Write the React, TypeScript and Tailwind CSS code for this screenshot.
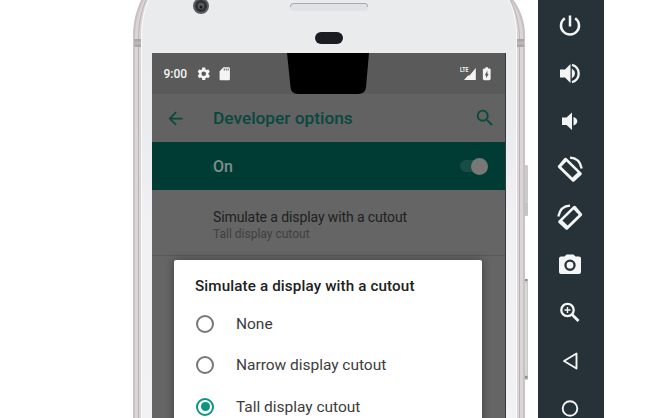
import type { ReactNode } from "react";

function Glyph({ children, size, className = "" }: { children: ReactNode; size: number; className?: string }) {
  return (
    <svg viewBox="0 0 24 24" width={size} height={size} fill="currentColor" className={"block shrink-0 " + className}>
      {children}
    </svg>
  );
}

function PhoneBody() {
  return (
    <svg viewBox="0 0 660 418" width="660" height="418" className="absolute left-0 top-0">
      <defs>
        <linearGradient id="face" x1="0" y1="0" x2="0" y2="1">
          <stop offset="0" stopColor="#e9ebec" />
          <stop offset="0.3" stopColor="#ebecef" />
          <stop offset="0.5" stopColor="#efeff4" />
          <stop offset="1" stopColor="#f1f1f6" />
        </linearGradient>
      </defs>
      <rect x="524" y="165" width="4" height="37" rx="1" fill="#c9cbcb" />
      <rect x="524" y="202" width="4" height="14" rx="1" fill="#c4c6c6" />
      <rect x="524.5" y="279" width="3.500" height="101" rx="1" fill="#c9cbc9" />
      <rect x="525.5" y="283" width="1" height="92" fill="#e6e7e4" />
      <rect x="525" y="279" width="2.500" height="2" fill="#8c8c8c" />
      <rect x="525" y="376" width="2.500" height="2.500" fill="#8c8c8c" />
      <path d="M133 418V35C133 21 137 8 142 -2H512C520 8 525 21 525 35V418Z" fill="#c9c1c4" />
      <path d="M135 418V37C135 22 139 8 145 -2H509C518 8 523 22 523 37V418Z" fill="#dcd5d7" />
      <path d="M138.500 418V40C138.500 22 142 8 147 -2M519.500 418V40C519.500 22 515 8 509 -2" stroke="#bcb3b6" fill="none" />
      <path d="M134.500 39H141V47H134.500ZM517 39H524V47H517Z" fill="#aaa5a7" />
      <path d="M135 43H141M517 43H524" stroke="#bdb7ba" strokeWidth="3" />
      <path d="M141 418V40C141 21 144 7 150 -3H507C514 7 517 21 517 40V418Z" fill="url(#face)" />
      <path d="M141.500 418V40C141.500 21 144.500 7 150 -3M516.500 418V40C516.500 21 513.500 7 507 -3" stroke="#fafafc" fill="none" />
      <circle cx="201" cy="6" r="8" fill="#5b5e61" />
      <circle cx="201" cy="6" r="6" fill="#2f3235" />
      <circle cx="201" cy="6" r="3.200" fill="#565c60" />
      <circle cx="201" cy="7" r="1.500" fill="#17191b" />
      <rect x="290" y="3" width="78" height="8" rx="3.500" fill="#e1e2e6" />
      <path d="M290.500 7V6Q290.500 3.500 294 3.500H365Q367.500 3.500 367.500 6V7" stroke="#a9a9b2" fill="none" />
      <rect x="315" y="32" width="28" height="12" rx="6" fill="#1b1c22" />
    </svg>
  );
}

function StatusBar() {
  return (
    <div className="relative flex h-[41px] items-center bg-[#5a5a5a] pl-[11.5px] pr-[11px] text-[#f4f4f4]">
      <svg viewBox="0 0 84 41" width="84" height="41" className="absolute left-[134px] top-0">
        <path d="M1 0H83L80 34Q79.500 41 72 41H12Q5 41 4.500 34Z" fill="#000" />
      </svg>
      <span className="w-[32.5px] text-[12px] font-medium leading-none">9:00</span>
      <Glyph size={15.500}>
        <path d="M19.140 12.940c.04-.3.060-.61.060-.94 0-.32-.02-.64-.07-.94l2.030-1.580a.49.49 0 0 0 .12-.61l-1.920-3.320a.488.488 0 0 0-.59-.22l-2.390.96c-.5-.38-1.030-.7-1.620-.94l-.36-2.540a.484.484 0 0 0-.48-.41h-3.840c-.24 0-.43.17-.47.41l-.36 2.540c-.59.24-1.130.57-1.620.94l-2.390-.96c-.22-.08-.47 0-.59.22L2.740 8.870c-.12.21-.08.47.12.61l2.030 1.580c-.05.3-.09.63-.09.94s.02.64.07.94l-2.030 1.580a.49.49 0 0 0-.12.61l1.920 3.320c.12.22.37.29.59.22l2.390-.96c.5.38 1.030.7 1.620.94l.36 2.540c.05.24.24.41.48.41h3.840c.24 0 .44-.17.47-.41l.36-2.540c.59-.24 1.130-.56 1.620-.94l2.390.96c.22.08.47 0 .59-.22l1.920-3.320c.12-.22.07-.47-.12-.61l-2.010-1.580zM12 15.600A3.600 3.600 0 1 1 12 8.400a3.600 3.600 0 0 1 0 7.200z" />
      </Glyph>
      <Glyph size={15.500} className="ml-[5px]">
        <path d="M18 2h-8L4.020 8 4 20c0 1.100.9 2 2 2h12c1.100 0 2-.9 2-2V4c0-1.100-.9-2-2-2zm-6 5h-1.500V4H12v3zm3 0h-1.500V4H15v3zm3 0h-1.500V4H18v3z" />
      </Glyph>
      <span className="relative ml-auto block h-[14px] w-[17px]">
        <span className="absolute left-0 top-0 origin-left scale-x-[0.75] text-[7px] font-bold leading-[7px]">LTE</span>
        <svg viewBox="0 0 17 14" width="17" height="14" className="absolute left-0 top-0">
          <path d="M15.800 1V13H4L8 8.500H9.500Z" fill="currentColor" />
        </svg>
      </span>
      <Glyph size={15.500} className="ml-[2px]">
        <path d="M15.670 4H14V2h-4v2H8.330C7.600 4 6 4.600 6 5.330v15.330C6 21.400 7.600 22 8.330 22h7.330c.74 0 2.340-.6 2.340-1.330V5.330C18 4.600 16.400 4 15.670 4zM11 19v-4.800H9L13 7v5.200h2L11 19z" />
      </Glyph>
    </div>
  );
}

function Radio({ label, on = false }: { label: string; on?: boolean }) {
  return (
    <div className="flex h-[41.500px] items-center">
      <span className={"flex size-[18px] items-center justify-center rounded-full border-2 " + (on ? "border-[#0b9580]" : "border-[#777777]")}>
        {on && <span className="size-[9px] rounded-full bg-[#0b9580]" />}
      </span>
      <span className="ml-[22px] pt-[1px] text-[15.500px] leading-none tracking-[-0.02px] text-[#3c3c3c]">{label}</span>
    </div>
  );
}

function Screen() {
  return (
    <div className="relative ml-[152px] mt-[53px] h-[365px] w-[354px] shrink-0 overflow-hidden border-r border-[#38383c] bg-[#656565]">
      <StatusBar />
      <div className="flex h-[48px] items-center bg-[#626262] pl-[13px] pr-[9.5px] text-[#08483f]">
        <Glyph size={21}>
          <path d="M20 11H7.830l5.590-5.590L12 4l-8 8 8 8 1.410-1.410L7.830 13H20v-2z" />
        </Glyph>
        <span className="ml-[27px] pt-[2px] text-[17.300px] font-medium leading-none">Developer options</span>
        <Glyph size={22} className="ml-auto">
          <path d="M15.500 14h-.79l-.28-.27A6.471 6.471 0 0 0 16 9.500 6.500 6.500 0 1 0 9.500 16c1.610 0 3.090-.59 4.230-1.570l.27.28v.79l5 4.990L20.490 19l-4.990-5zm-6 0C7.010 14 5 11.990 5 9.500S7.010 5 9.500 5 14 7.010 14 9.500 11.990 14 9.500 14z" />
        </Glyph>
      </div>
      <div className="flex h-[48px] items-center justify-between bg-[#003c34] pl-[61px] pr-[17px]">
        <span className="pt-[2px] text-[16px] font-medium leading-none text-[#7d8f8c]">On</span>
        <span className="flex h-[12px] w-[28px] items-center justify-end rounded-full bg-[#174d46]">
          <span className="size-[17px] shrink-0 rounded-full bg-[#777777]" />
        </span>
      </div>
      <div className="h-[66px] border-b border-[#595959] pl-[61px] pt-[17px]">
        <div className="whitespace-nowrap text-[14px] leading-[20px] tracking-[-0.1px] text-[#202020]">Simulate a display with a cutout</div>
        <div className="text-[12px] leading-[15px] text-[#404040]">Tall display cutout</div>
      </div>
      <div className="ml-[22px] mt-[4px] h-[170px] w-[308px] rounded-t-[2px] bg-white pl-[22px] pt-[16px] shadow-[0_0_10px_rgba(0,0,0,0.35)]">
        <div className="-ml-[1px] h-[27px] whitespace-nowrap text-[15.200px] font-medium leading-[20px] tracking-[0.13px] text-[#212121]">Simulate a display with a cutout</div>
        <Radio label="None" />
        <Radio label="Narrow display cutout" />
        <Radio label="Tall display cutout" on />
      </div>
    </div>
  );
}

function Toolbar() {
  const cell = "flex h-[48px] w-full shrink-0 items-center justify-center";
  return (
    <div className="ml-[32px] flex h-[418px] w-[66px] shrink-0 flex-col items-center overflow-hidden bg-[#263238] pr-[2px] pt-[1px] text-[#f4f6f6]">
      <div className={cell}>
        <svg viewBox="0 0 24 24" width="24" height="24" fill="none" stroke="currentColor" strokeWidth="2.500">
          <path d="M12 2.500V13.500M6.800 5.200A9 9 0 1 0 17.200 5.200" />
        </svg>
      </div>
      <div className={cell}>
        <svg viewBox="0 0 24 24" width="24" height="24" fill="currentColor">
          <path d="M2 8.500H7L12.500 3V22L7 16.500H2ZM13.800 7.500Q17 9.500 17 12.500Q17 15.500 13.800 17.500Z" />
          <path d="M14 3.800A9 9 0 0 1 14 21.200" fill="none" stroke="currentColor" strokeWidth="2.400" />
        </svg>
      </div>
      <div className={cell}>
        <svg viewBox="0 0 24 24" width="24" height="24" fill="currentColor">
          <path d="M4 8.500H8.500L14 3.500V21L8.500 16H4ZM15.500 8Q19.300 9.500 19.300 12.200Q19.300 15 15.500 16.500Z" />
        </svg>
      </div>
      <div className={cell}><RotateIcon /></div>
      <div className={cell}><RotateIcon flipped /></div>
      <div className={cell}>
        <svg viewBox="0 0 24 24" width="24" height="24" fill="currentColor">
          <path fillRule="evenodd" d="M8.500 1.500H15.500L17.500 3.500H21Q23 3.500 23 5.500V19Q23 21 21 21H3Q1 21 1 19V5.500Q1 3.500 3 3.500H6.500ZM12 6.500A5.700 5.700 0 1 0 12 17.900A5.700 5.700 0 1 0 12 6.500ZM12 8.800A3.400 3.400 0 1 1 12 15.600A3.400 3.400 0 1 1 12 8.800Z" />
        </svg>
      </div>
      <div className={cell}>
        <svg viewBox="0 0 24 24" width="24" height="24" fill="none" stroke="currentColor" strokeWidth="2.300">
          <circle cx="9.500" cy="9" r="6.200" />
          <path d="M14 13.500L20.500 20" strokeWidth="2.900" />
          <path d="M9.500 6V12M6.500 9H12.500" strokeWidth="1.400" />
        </svg>
      </div>
      <div className={cell}>
        <svg viewBox="0 0 24 24" width="24" height="24" fill="none" stroke="currentColor" strokeWidth="1.900" strokeLinejoin="round">
          <path d="M18.500 4.500V19.500L6 12Z" />
        </svg>
      </div>
      <div className={cell}>
        <svg viewBox="0 0 24 24" width="24" height="24" fill="none" stroke="currentColor" strokeWidth="1.900">
          <circle cx="12" cy="11.500" r="7.300" />
        </svg>
      </div>
    </div>
  );
}

function RotateIcon({ flipped = false }: { flipped?: boolean }) {
  return (
    <svg viewBox="0 0 26 26" width="26" height="26" className={flipped ? "-scale-x-100" : ""}>
      <path fillRule="evenodd" fill="currentColor" d="M9.700 2.300L24.200 16.400Q25.400 17.600 24.200 18.900L17.500 25.200Q16.300 26.200 15.100 25.200L1.300 11.800Q.3 10.600 1.300 9.400L7.300 2.300Q8.600 1.200 9.700 2.300ZM9.400 5.600L4.300 10.700L15.400 21.500L20.600 16.500Z" />
      <path d="M13 1.700Q22.500 2 24.700 12.500" stroke="currentColor" strokeWidth="2.300" fill="none" />
    </svg>
  );
}

export default function App() {
  return (
    <div className="relative h-[418px] w-[660px] overflow-hidden bg-white font-['Roboto',sans-serif]">
      <PhoneBody />
      <div className="relative flex items-start">
        <Screen />
        <Toolbar />
      </div>
    </div>
  );
}
